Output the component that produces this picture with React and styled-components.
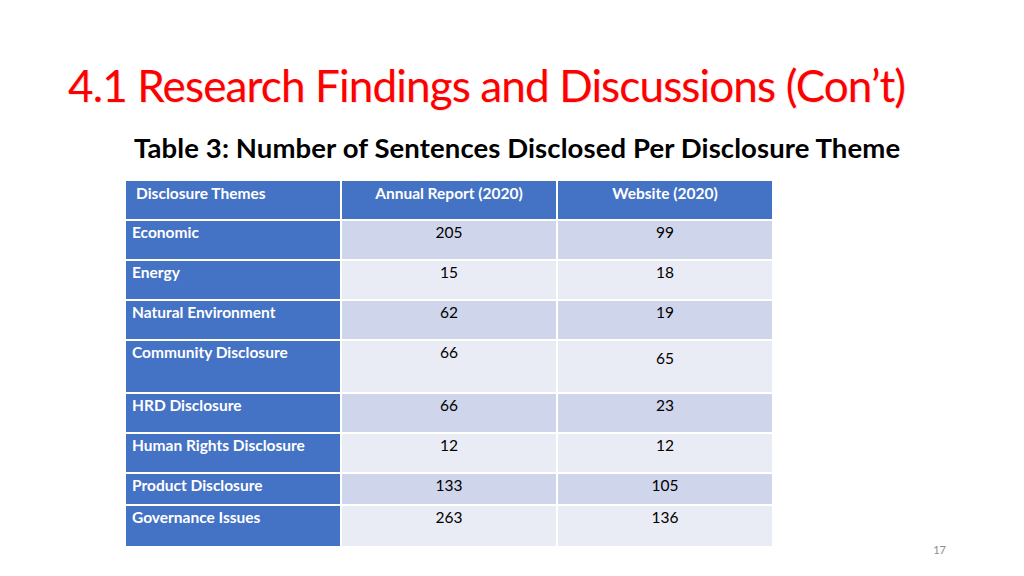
import React from "react";
import styled, { createGlobalStyle } from "styled-components";

const GlobalStyle = createGlobalStyle`
  html, body {
    margin: 0;
    padding: 0;
    background: #ffffff;
  }
  body {
    font-family: Lato, "Open Sans", sans-serif;
  }
`;

const rows = [
  { theme: "Economic", annual: "205", web: "99", height: 38 },
  { theme: "Energy", annual: "15", web: "18", height: 38 },
  { theme: "Natural Environment", annual: "62", web: "19", height: 38 },
  { theme: "Community Disclosure", annual: "66", web: "65", height: 51, webDrop: true },
  { theme: "HRD Disclosure", annual: "66", web: "23", height: 38 },
  { theme: "Human Rights Disclosure", annual: "12", web: "12", height: 38 },
  { theme: "Product Disclosure", annual: "133", web: "105", height: 30 },
  { theme: "Governance Issues", annual: "263", web: "136", height: 40 },
];

const Slide = styled.div`
  width: 1024px;
  height: 576px;
  box-sizing: border-box;
  padding: 58px 0 0 68px;
  position: relative;
  overflow: hidden;
  background: #ffffff;
`;

const Title = styled.h1`
  margin: 0;
  font-family: Lato, "Open Sans", sans-serif;
  font-weight: 400;
  font-size: 44px;
  line-height: 54px;
  color: #ff0000;
  letter-spacing: -0.85px;
  text-shadow: 1px 1px 1px rgba(0, 0, 0, 0.12);
`;

const Caption = styled.h2`
  margin: 19px 0 0 66px;
  font-family: Lato, "Open Sans", sans-serif;
  font-weight: 700;
  font-size: 27.5px;
  line-height: 34px;
  color: #000000;
  letter-spacing: 0.1px;
`;

const Grid = styled.div`
  margin: 16px 0 0 58px;
  width: 646px;
  display: grid;
  grid-template-columns: 214px 214px 214px;
  gap: 2px;
  background: #ffffff;
`;

const HeadCell = styled.div`
  height: 38px;
  background: #4472c4;
  color: #ffffff;
  font-weight: 700;
  font-size: 15.5px;
  line-height: 19px;
  box-sizing: border-box;
  padding: 3px 10px 0;
  text-align: ${(p) => (p.$center ? "center" : "left")};
`;

const ThemeCell = styled.div`
  height: ${(p) => p.$h}px;
  background: #4472c4;
  color: #ffffff;
  font-weight: 700;
  font-size: 15.5px;
  line-height: 19px;
  box-sizing: border-box;
  padding: 2px 6px 0;
`;

const ValueCell = styled.div`
  height: ${(p) => p.$h}px;
  background: ${(p) => (p.$odd ? "#e9ebf5" : "#cfd5ea")};
  color: #000000;
  font-size: 15.5px;
  line-height: 19px;
  text-align: center;
  box-sizing: border-box;
  padding: ${(p) => (p.$drop ? "8px" : "2px")} 6px 0;
`;

const PageNum = styled.div`
  position: absolute;
  right: 78px;
  bottom: 20px;
  font-size: 11px;
  color: #8c8c8c;
`;

export default function App() {
  return (
    <>
      <GlobalStyle />
      <Slide>
        <Title>4.1 Research Findings and Discussions (Con’t)</Title>
        <Caption>Table 3: Number of Sentences Disclosed Per Disclosure Theme</Caption>
        <Grid>
          <HeadCell>Disclosure Themes</HeadCell>
          <HeadCell $center>Annual Report (2020)</HeadCell>
          <HeadCell $center>Website (2020)</HeadCell>
          {rows.map((r, i) => (
            <React.Fragment key={r.theme}>
              <ThemeCell $h={r.height}>{r.theme}</ThemeCell>
              <ValueCell $h={r.height} $odd={i % 2 === 1}>{r.annual}</ValueCell>
              <ValueCell $h={r.height} $odd={i % 2 === 1} $drop={r.webDrop}>
                {r.web}
              </ValueCell>
            </React.Fragment>
          ))}
        </Grid>
        <PageNum>17</PageNum>
      </Slide>
    </>
  );
}
